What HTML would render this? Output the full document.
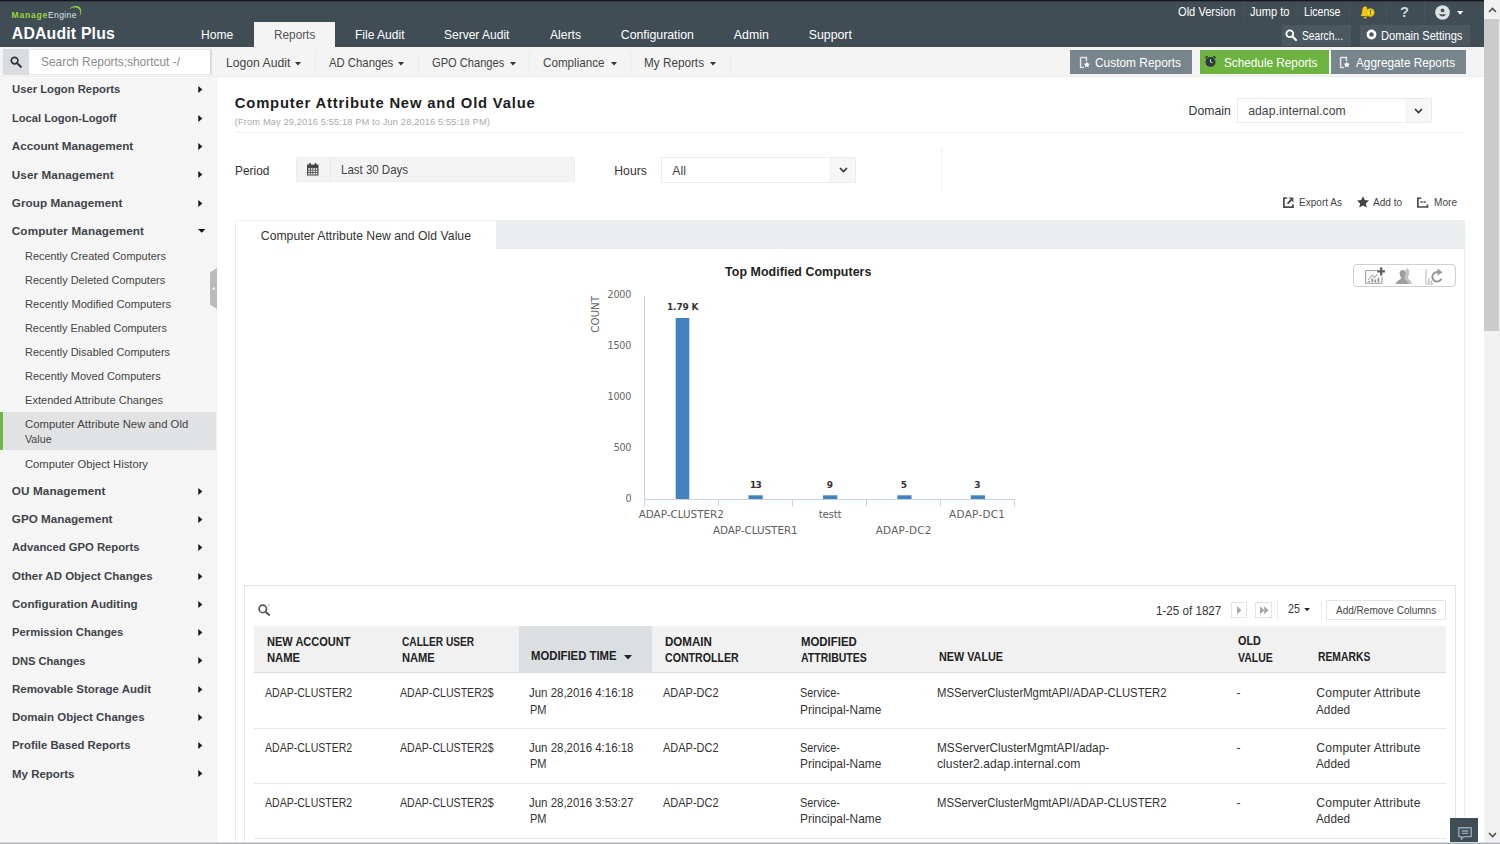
<!DOCTYPE html>
<html lang="en">
<head>
<meta charset="utf-8">
<title>ADAudit Plus - Computer Attribute New and Old Value</title>
<style>
*{box-sizing:border-box;margin:0;padding:0}
html,body{width:1500px;height:844px;overflow:hidden;background:#fff}
body{font-family:"Liberation Sans",sans-serif;color:#333;position:relative}
.t{position:absolute;white-space:pre;display:block;transform-origin:0 50%}
.abs{position:absolute}
svg{position:absolute;overflow:visible}
ul{list-style:none}
a{color:inherit;text-decoration:none}
</style>
</head>
<body>

<header class="abs" style="left:0;top:0;width:1484px;height:47px;background:#404d55">
<div style="position:absolute;left:0px;top:0px;width:1484px;height:1px;background:#14181b"></div>
<div style="position:absolute;left:0px;top:1px;width:1484px;height:1px;background:#313b41"></div>
<span class="t" style="left:11.6px;top:10px;font-size:8.6px;line-height:11px;font-weight:700;color:#9ad53a;letter-spacing:0.76px;">Manage</span>
<span class="t" style="left:48.0px;top:10px;font-size:8.6px;line-height:11px;color:#dde3e7;letter-spacing:0.35px;">Engine</span>
<svg style="left:68px;top:5px" width="14" height="13" viewBox="0 0 14 13"><path d="M1.2 4.2 C4 1 9 0 11.8 2.6 C14.2 5 13.6 9.2 11.2 12 C12.6 9 12.8 5.6 10.8 3.9 C8.4 1.9 4.4 2.4 1.2 4.2Z" fill="#8fd03a"/></svg>
<span class="t" style="left:11.8px;top:23px;font-size:15.8px;line-height:21px;font-weight:700;color:#fff;letter-spacing:0.19px;">ADAudit Plus</span>
<nav>
<div style="position:absolute;left:254px;top:22px;width:81px;height:25px;background:#f4f4f4"></div>
<a class="t" style="left:201.0px;top:27px;font-size:12.3px;line-height:16px;color:#fff;transform:scaleX(0.981);">Home</a>
<a class="t" style="left:273.8px;top:27px;font-size:12.3px;line-height:16px;color:#555;transform:scaleX(0.959);">Reports</a>
<a class="t" style="left:355.0px;top:27px;font-size:12.3px;line-height:16px;color:#fff;transform:scaleX(0.978);">File Audit</a>
<a class="t" style="left:444.1px;top:27px;font-size:12.3px;line-height:16px;color:#fff;transform:scaleX(0.976);">Server Audit</a>
<a class="t" style="left:549.8px;top:27px;font-size:12.3px;line-height:16px;color:#fff;transform:scaleX(0.986);">Alerts</a>
<a class="t" style="left:620.8px;top:27px;font-size:12.3px;line-height:16px;color:#fff;">Configuration</a>
<a class="t" style="left:733.8px;top:27px;font-size:12.3px;line-height:16px;color:#fff;letter-spacing:0.04px;">Admin</a>
<a class="t" style="left:808.8px;top:27px;font-size:12.3px;line-height:16px;color:#fff;">Support</a>
</nav>
<a class="t" style="left:1178.3px;top:4px;font-size:12.2px;line-height:16px;color:#fff;transform:scaleX(0.912);">Old Version</a>
<a class="t" style="left:1249.8px;top:4px;font-size:12.2px;line-height:16px;color:#fff;transform:scaleX(0.911);">Jump to</a>
<a class="t" style="left:1304.3px;top:4px;font-size:12.2px;line-height:16px;color:#fff;transform:scaleX(0.869);">License</a>
<div style="position:absolute;left:1243.5px;top:3px;width:1px;height:19px;background:#47545c"></div>
<div style="position:absolute;left:1296.5px;top:3px;width:1px;height:19px;background:#47545c"></div>
<div style="position:absolute;left:1348.5px;top:3px;width:1px;height:19px;background:#47545c"></div>
<div style="position:absolute;left:1385.5px;top:3px;width:1px;height:19px;background:#47545c"></div>
<div style="position:absolute;left:1424px;top:3px;width:1px;height:19px;background:#47545c"></div>
<svg style="left:1359.5px;top:5.5px" width="15" height="13" viewBox="0 0 15 13"><path d="M5 0.3 C2.6 0.8 2.4 3.6 2.1 6.4 C1.9 8 1.2 8.9 0.3 9.8 L7.5 10.4 L7 1.2Z" fill="#f3c613"/><ellipse cx="5.2" cy="11.6" rx="1.5" ry="0.9" fill="#e3b40c"/><circle cx="10.3" cy="6.6" r="4.1" fill="#f7dc1c"/><circle cx="10.3" cy="6.6" r="3.6" fill="none" stroke="#d9a90a" stroke-width="0.7"/><path d="M9.6 5.2 L10.6 4.4 V8.8" fill="none" stroke="#5a4a08" stroke-width="0.9"/></svg>
<span class="t" style="left:1400.1px;top:3px;font-size:14.6px;line-height:19px;font-weight:700;color:#d3d8db;">?</span>
<svg style="left:1435px;top:4.7px" width="15" height="15" viewBox="0 0 15 15"><circle cx="7.5" cy="7.5" r="7.3" fill="#dfe2e4"/><circle cx="7.5" cy="5.4" r="1.9" fill="#46535b"/><path d="M4 8.6 C4.6 12.6 10.4 12.6 11 8.6 C9.6 9.8 5.4 9.8 4 8.6Z" fill="#46535b"/></svg>
<svg style="left:1456.8px;top:10.6px" width="6.4" height="3.8" viewBox="0 0 8 5"><path d="M0 0 L8 0 L4 5Z" fill="#fff"/></svg>
<div style="position:absolute;left:1281.5px;top:25px;width:69.5px;height:21px;background:#4b5860"></div>
<svg style="left:1285px;top:29px" width="12" height="12" viewBox="0 0 12 12"><circle cx="4.8" cy="4.8" r="3.4" fill="none" stroke="#fff" stroke-width="1.8"/><path d="M7.4 7.4 L11 11" stroke="#fff" stroke-width="2.2" stroke-linecap="round"/></svg>
<span class="t" style="left:1301.8px;top:28px;font-size:12.2px;line-height:16px;color:#fff;transform:scaleX(0.840);">Search...</span>
<div style="position:absolute;left:1359.5px;top:25px;width:110.5px;height:21px;background:#4b5860"></div>
<svg style="left:1365.5px;top:29.4px" width="11" height="11" viewBox="0 0 11 11"><circle cx="5.5" cy="5.5" r="3.6" fill="none" stroke="#fff" stroke-width="2.6"/></svg>
<span class="t" style="left:1380.6px;top:28px;font-size:12.2px;line-height:16px;color:#fff;transform:scaleX(0.910);">Domain Settings</span>
</header>
<div class="abs" style="left:0;top:47px;width:1484px;height:30px;background:#f4f4f4;border-bottom:1px solid #ececec">
<div style="position:absolute;left:3px;top:2px;width:26px;height:26px;background:#d9dcde"></div>
<svg style="left:9.5px;top:8.5px" width="12" height="12" viewBox="0 0 12 12"><circle cx="4.6" cy="4.6" r="3.3" fill="none" stroke="#333" stroke-width="1.7"/><path d="M7.2 7.2 L10.8 10.8" stroke="#333" stroke-width="2.1" stroke-linecap="round"/></svg>
<div style="position:absolute;left:29px;top:2px;width:183px;height:26px;background:#fff;border:1px solid #e6e8e9;border-left:0;border-right:2px solid #d9dcde"></div>
<span class="t" style="left:40.8px;top:7px;font-size:12.2px;line-height:16px;color:#8a8a8a;transform:scaleX(0.977);">Search Reports;shortcut -/</span>
<a class="t" style="left:226.0px;top:8px;font-size:12.2px;line-height:16px;color:#444;">Logon Audit</a>
<svg style="left:295px;top:15px" width="6" height="4" viewBox="0 0 6 4"><path d="M0 0 L6 0 L3 3.6Z" fill="#333"/></svg>
<a class="t" style="left:328.6px;top:8px;font-size:12.2px;line-height:16px;color:#444;transform:scaleX(0.929);">AD Changes</a>
<svg style="left:398px;top:15px" width="6" height="4" viewBox="0 0 6 4"><path d="M0 0 L6 0 L3 3.6Z" fill="#333"/></svg>
<a class="t" style="left:431.8px;top:8px;font-size:12.2px;line-height:16px;color:#444;transform:scaleX(0.912);">GPO Changes</a>
<svg style="left:510px;top:15px" width="6" height="4" viewBox="0 0 6 4"><path d="M0 0 L6 0 L3 3.6Z" fill="#333"/></svg>
<a class="t" style="left:543.3px;top:8px;font-size:12.2px;line-height:16px;color:#444;transform:scaleX(0.956);">Compliance</a>
<svg style="left:610.5px;top:15px" width="6" height="4" viewBox="0 0 6 4"><path d="M0 0 L6 0 L3 3.6Z" fill="#333"/></svg>
<a class="t" style="left:644.3px;top:8px;font-size:12.2px;line-height:16px;color:#444;transform:scaleX(0.963);">My Reports</a>
<svg style="left:710px;top:15px" width="6" height="4" viewBox="0 0 6 4"><path d="M0 0 L6 0 L3 3.6Z" fill="#333"/></svg>
<div style="position:absolute;left:314.5px;top:5px;width:1px;height:22px;background:#eaeaea"></div>
<div style="position:absolute;left:417.5px;top:5px;width:1px;height:22px;background:#eaeaea"></div>
<div style="position:absolute;left:529px;top:5px;width:1px;height:22px;background:#eaeaea"></div>
<div style="position:absolute;left:630px;top:5px;width:1px;height:22px;background:#eaeaea"></div>
<div style="position:absolute;left:730px;top:5px;width:1px;height:22px;background:#eaeaea"></div>
<div style="position:absolute;left:1070px;top:3px;width:122px;height:24px;background:#79858c"></div>
<div style="position:absolute;left:1200px;top:3px;width:129px;height:24px;background:#6cb33f"></div>
<div style="position:absolute;left:1331px;top:3px;width:134.5px;height:24px;background:#79858c"></div>
<svg style="left:1080px;top:10px" width="10" height="11" viewBox="0 0 10 11"><path d="M0.6 0.6 H6.4 V4 M0.6 0.6 V10.4 H4" fill="none" stroke="#e4e8ea" stroke-width="1.5"/><path d="M6.8 4.3 L7.7 6.5 L10 6.7 L8.3 8.2 L8.8 10.5 L6.8 9.3 L4.8 10.5 L5.3 8.2 L3.6 6.7 L5.9 6.5Z" fill="#fff"/></svg>
<span class="t" style="left:1094.8px;top:8px;font-size:12.2px;line-height:16px;color:#fff;transform:scaleX(0.977);">Custom Reports</span>
<svg style="left:1204px;top:8px" width="13" height="13" viewBox="0 0 13 13"><circle cx="6.5" cy="7" r="5" fill="#2f3a40"/><path d="M6.5 4.2 V7 L8.6 7.8" stroke="#cfe6b8" stroke-width="1" fill="none"/><path d="M1.5 3.2 L3.6 1.2 M11.5 3.2 L9.4 1.2" stroke="#2f3a40" stroke-width="1.6"/></svg>
<span class="t" style="left:1223.8px;top:8px;font-size:12.2px;line-height:16px;color:#fff;transform:scaleX(0.965);">Schedule Reports</span>
<svg style="left:1340px;top:10px" width="10" height="11" viewBox="0 0 10 11"><path d="M0.6 0.6 H6.4 V4 M0.6 0.6 V10.4 H4" fill="none" stroke="#e4e8ea" stroke-width="1.5"/><path d="M6.8 4.3 L7.7 6.5 L10 6.7 L8.3 8.2 L8.8 10.5 L6.8 9.3 L4.8 10.5 L5.3 8.2 L3.6 6.7 L5.9 6.5Z" fill="#fff"/></svg>
<span class="t" style="left:1355.8px;top:8px;font-size:12.2px;line-height:16px;color:#fff;transform:scaleX(0.968);">Aggregate Reports</span>
</div>
<aside class="abs" style="left:0;top:77px;width:217px;height:767px;background:#f5f5f5;border-right:1px solid #f0f0f0"><ul>
<li><a class="t" style="left:11.8px;top:4px;font-size:11.7px;line-height:15px;font-weight:700;color:#40444a;transform:scaleX(0.964);">User Logon Reports</a>
<svg style="left:197.5px;top:9.2px" width="5" height="7" viewBox="0 0 5 7"><path d="M0.3 0 L4.3 3.5 L0.3 7Z" fill="#111"/></svg></li>
<li><a class="t" style="left:11.8px;top:33px;font-size:11.7px;line-height:15px;font-weight:700;color:#40444a;transform:scaleX(0.953);">Local Logon-Logoff</a>
<svg style="left:197.5px;top:37.6px" width="5" height="7" viewBox="0 0 5 7"><path d="M0.3 0 L4.3 3.5 L0.3 7Z" fill="#111"/></svg></li>
<li><a class="t" style="left:11.8px;top:61px;font-size:11.7px;line-height:15px;font-weight:700;color:#40444a;">Account Management</a>
<svg style="left:197.5px;top:65.9px" width="5" height="7" viewBox="0 0 5 7"><path d="M0.3 0 L4.3 3.5 L0.3 7Z" fill="#111"/></svg></li>
<li><a class="t" style="left:11.8px;top:90px;font-size:11.7px;line-height:15px;font-weight:700;color:#40444a;letter-spacing:0.09px;">User Management</a>
<svg style="left:197.5px;top:94.3px" width="5" height="7" viewBox="0 0 5 7"><path d="M0.3 0 L4.3 3.5 L0.3 7Z" fill="#111"/></svg></li>
<li><a class="t" style="left:11.8px;top:118px;font-size:11.7px;line-height:15px;font-weight:700;color:#40444a;letter-spacing:0.05px;">Group Management</a>
<svg style="left:197.5px;top:122.7px" width="5" height="7" viewBox="0 0 5 7"><path d="M0.3 0 L4.3 3.5 L0.3 7Z" fill="#111"/></svg></li>
<li><a class="t" style="left:11.8px;top:146px;font-size:11.7px;line-height:15px;font-weight:700;color:#40444a;letter-spacing:0.13px;">Computer Management</a>
<svg style="left:198.3px;top:152.4px" width="7.4" height="3.8" viewBox="0 0 8 4"><path d="M0 0 L8 0 L4 4Z" fill="#111"/></svg></li>
<li><a class="t" style="left:25.1px;top:171px;font-size:11.7px;line-height:15px;color:#444;transform:scaleX(0.935);">Recently Created Computers</a></li>
<li><a class="t" style="left:25.1px;top:195px;font-size:11.7px;line-height:15px;color:#444;transform:scaleX(0.938);">Recently Deleted Computers</a></li>
<li><a class="t" style="left:25.1px;top:219px;font-size:11.7px;line-height:15px;color:#444;transform:scaleX(0.952);">Recently Modified Computers</a></li>
<li><a class="t" style="left:25.1px;top:243px;font-size:11.7px;line-height:15px;color:#444;transform:scaleX(0.933);">Recently Enabled Computers</a></li>
<li><a class="t" style="left:25.1px;top:267px;font-size:11.7px;line-height:15px;color:#444;transform:scaleX(0.938);">Recently Disabled Computers</a></li>
<li><a class="t" style="left:25.1px;top:291px;font-size:11.7px;line-height:15px;color:#444;transform:scaleX(0.941);">Recently Moved Computers</a></li>
<li><a class="t" style="left:25.1px;top:315px;font-size:11.7px;line-height:15px;color:#444;transform:scaleX(0.948);">Extended Attribute Changes</a></li>
<li><div style="position:absolute;left:0px;top:335px;width:216px;height:38px;background:#e1e2e3;border-left:3px solid #70b644"></div>
<a class="t" style="left:25.1px;top:339px;font-size:11.6px;line-height:15px;color:#444;transform:scaleX(0.978);">Computer Attribute New and Old</a>
<a class="t" style="left:25.1px;top:354px;font-size:11.6px;line-height:15px;color:#444;transform:scaleX(0.927);">Value</a></li>
<li><a class="t" style="left:25.1px;top:379px;font-size:11.6px;line-height:15px;color:#444;transform:scaleX(0.969);">Computer Object History</a></li>
<li><a class="t" style="left:11.8px;top:406px;font-size:11.7px;line-height:15px;font-weight:700;color:#40444a;letter-spacing:0.12px;">OU Management</a>
<svg style="left:197.5px;top:410.7px" width="5" height="7" viewBox="0 0 5 7"><path d="M0.3 0 L4.3 3.5 L0.3 7Z" fill="#111"/></svg></li>
<li><a class="t" style="left:11.8px;top:434px;font-size:11.7px;line-height:15px;font-weight:700;color:#40444a;">GPO Management</a>
<svg style="left:197.5px;top:439px" width="5" height="7" viewBox="0 0 5 7"><path d="M0.3 0 L4.3 3.5 L0.3 7Z" fill="#111"/></svg></li>
<li><a class="t" style="left:11.8px;top:462px;font-size:11.7px;line-height:15px;font-weight:700;color:#40444a;transform:scaleX(0.962);">Advanced GPO Reports</a>
<svg style="left:197.5px;top:467.2px" width="5" height="7" viewBox="0 0 5 7"><path d="M0.3 0 L4.3 3.5 L0.3 7Z" fill="#111"/></svg></li>
<li><a class="t" style="left:11.8px;top:491px;font-size:11.7px;line-height:15px;font-weight:700;color:#40444a;transform:scaleX(0.982);">Other AD Object Changes</a>
<svg style="left:197.5px;top:495.5px" width="5" height="7" viewBox="0 0 5 7"><path d="M0.3 0 L4.3 3.5 L0.3 7Z" fill="#111"/></svg></li>
<li><a class="t" style="left:11.8px;top:519px;font-size:11.7px;line-height:15px;font-weight:700;color:#40444a;transform:scaleX(0.990);">Configuration Auditing</a>
<svg style="left:197.5px;top:523.8px" width="5" height="7" viewBox="0 0 5 7"><path d="M0.3 0 L4.3 3.5 L0.3 7Z" fill="#111"/></svg></li>
<li><a class="t" style="left:11.8px;top:547px;font-size:11.7px;line-height:15px;font-weight:700;color:#40444a;transform:scaleX(0.963);">Permission Changes</a>
<svg style="left:197.5px;top:552px" width="5" height="7" viewBox="0 0 5 7"><path d="M0.3 0 L4.3 3.5 L0.3 7Z" fill="#111"/></svg></li>
<li><a class="t" style="left:11.8px;top:576px;font-size:11.7px;line-height:15px;font-weight:700;color:#40444a;transform:scaleX(0.951);">DNS Changes</a>
<svg style="left:197.5px;top:580.3px" width="5" height="7" viewBox="0 0 5 7"><path d="M0.3 0 L4.3 3.5 L0.3 7Z" fill="#111"/></svg></li>
<li><a class="t" style="left:11.8px;top:604px;font-size:11.7px;line-height:15px;font-weight:700;color:#40444a;transform:scaleX(0.980);">Removable Storage Audit</a>
<svg style="left:197.5px;top:608.6px" width="5" height="7" viewBox="0 0 5 7"><path d="M0.3 0 L4.3 3.5 L0.3 7Z" fill="#111"/></svg></li>
<li><a class="t" style="left:11.8px;top:632px;font-size:11.7px;line-height:15px;font-weight:700;color:#40444a;transform:scaleX(0.981);">Domain Object Changes</a>
<svg style="left:197.5px;top:636.9px" width="5" height="7" viewBox="0 0 5 7"><path d="M0.3 0 L4.3 3.5 L0.3 7Z" fill="#111"/></svg></li>
<li><a class="t" style="left:11.8px;top:660px;font-size:11.7px;line-height:15px;font-weight:700;color:#40444a;transform:scaleX(0.970);">Profile Based Reports</a>
<svg style="left:197.5px;top:665.1px" width="5" height="7" viewBox="0 0 5 7"><path d="M0.3 0 L4.3 3.5 L0.3 7Z" fill="#111"/></svg></li>
<li><a class="t" style="left:11.8px;top:689px;font-size:11.7px;line-height:15px;font-weight:700;color:#40444a;transform:scaleX(0.982);">My Reports</a>
<svg style="left:197.5px;top:693.4px" width="5" height="7" viewBox="0 0 5 7"><path d="M0.3 0 L4.3 3.5 L0.3 7Z" fill="#111"/></svg></li>
</ul>
<svg style="left:209.5px;top:190.5px" width="7" height="41" viewBox="0 0 7 41"><path d="M7 0 L0 4.5 V36.5 L7 41Z" fill="#b7bbbd"/><path d="M4.6 18.5 L2.4 20.5 L4.6 22.5Z" fill="#fff"/></svg>
</aside>
<main class="abs" style="left:217px;top:77px;width:1267px;height:767px;background:#fff">
<div style="position:absolute;left:18px;top:143px;width:1230px;height:624px;border-left:1px solid #e9e9e9;border-right:1px solid #ededed"></div>
<h1 class="t" style="left:17.8px;top:17px;font-size:14.8px;line-height:19px;font-weight:700;color:#1d1d1d;letter-spacing:0.81px;">Computer Attribute New and Old Value</h1>
<span class="t" style="left:17.8px;top:39px;font-size:9.3px;line-height:12px;color:#aaa;letter-spacing:0.12px;">(From May 29,2016 5:55:18 PM to Jun 28,2016 5:55:18 PM)</span>
<label class="t" style="left:971.6px;top:26px;font-size:12.2px;line-height:16px;color:#333;letter-spacing:0.04px;">Domain</label>
<div style="position:absolute;left:1020px;top:21px;width:195px;height:24.5px;background:#fff;border:1px solid #ebebeb"></div>
<div style="position:absolute;left:1189px;top:22px;width:25px;height:22.5px;background:#f6f6f6;border-left:1px solid #efefef"></div>
<span class="t" style="left:1031.2px;top:26px;font-size:12.2px;line-height:16px;color:#444;letter-spacing:0.04px;">adap.internal.com</span>
<svg style="left:1197px;top:30.5px" width="9" height="6" viewBox="0 0 9 6"><path d="M1 1 L4.5 4.5 L8 1" fill="none" stroke="#333" stroke-width="1.7"/></svg>
<div style="position:absolute;left:18px;top:54.5px;width:1230px;height:1px;background:#f3f3f3"></div>
<label class="t" style="left:17.8px;top:86px;font-size:12.2px;line-height:16px;color:#333;transform:scaleX(0.979);">Period</label>
<div style="position:absolute;left:79px;top:80px;width:279px;height:25px;background:#f3f3f3;border:1px solid #ededed"></div>
<div style="position:absolute;left:113px;top:81px;width:1px;height:23px;background:#e8e8e8"></div>
<svg style="left:89.8px;top:86.3px" width="11.5" height="12.5" viewBox="0 0 11 12"><rect x="0" y="1.5" width="11" height="10.5" fill="#444"/><rect x="2" y="0" width="1.6" height="3" fill="#444"/><rect x="7.4" y="0" width="1.6" height="3" fill="#444"/><g fill="#f3f3f3"><rect x="1.2" y="5" width="1.7" height="1.5"/><rect x="3.6" y="5" width="1.7" height="1.5"/><rect x="6" y="5" width="1.7" height="1.5"/><rect x="8.3" y="5" width="1.6" height="1.5"/><rect x="1.2" y="7.3" width="1.7" height="1.5"/><rect x="3.6" y="7.3" width="1.7" height="1.5"/><rect x="6" y="7.3" width="1.7" height="1.5"/><rect x="8.3" y="7.3" width="1.6" height="1.5"/><rect x="1.2" y="9.6" width="1.7" height="1.5"/><rect x="3.6" y="9.6" width="1.7" height="1.5"/><rect x="6" y="9.6" width="1.7" height="1.5"/><rect x="8.3" y="9.6" width="1.6" height="1.5"/></g></svg>
<span class="t" style="left:123.8px;top:85px;font-size:12.2px;line-height:16px;color:#444;transform:scaleX(0.942);">Last 30 Days</span>
<label class="t" style="left:397.3px;top:86px;font-size:12.2px;line-height:16px;color:#333;">Hours</label>
<div style="position:absolute;left:444px;top:80px;width:195px;height:26px;background:#fff;border:1px solid #ebebeb"></div>
<div style="position:absolute;left:613px;top:81px;width:25px;height:24px;background:#f6f6f6;border-left:1px solid #efefef"></div>
<span class="t" style="left:455.3px;top:86px;font-size:12.2px;line-height:16px;color:#444;">All</span>
<svg style="left:621.5px;top:90px" width="9" height="6" viewBox="0 0 9 6"><path d="M1 1 L4.5 4.5 L8 1" fill="none" stroke="#333" stroke-width="1.7"/></svg>
<div style="position:absolute;left:724px;top:70.5px;width:1px;height:44px;background:#f0f0f0"></div>
<svg style="left:1066px;top:120px" width="11" height="11" viewBox="0 0 11 11"><path d="M4.2 1 H0.9 V10.1 H10 V7.2" fill="none" stroke="#4a4a4a" stroke-width="1.7"/><path d="M4.6 6.6 L8.2 3" fill="none" stroke="#4a4a4a" stroke-width="2"/><path d="M5.6 0.6 H10.4 V5.4Z" fill="#4a4a4a"/></svg>
<a class="t" style="left:1081.8px;top:119px;font-size:10.3px;line-height:13px;color:#444;transform:scaleX(0.976);">Export As</a>
<svg style="left:1140px;top:119px" width="12" height="12" viewBox="0 0 12 12"><path d="M6 0.3 L7.8 4.1 L12 4.6 L8.9 7.4 L9.7 11.6 L6 9.5 L2.3 11.6 L3.1 7.4 L0 4.6 L4.2 4.1Z" fill="#444"/></svg>
<a class="t" style="left:1155.6px;top:119px;font-size:10.3px;line-height:13px;color:#444;transform:scaleX(0.980);">Add to</a>
<svg style="left:1200px;top:120px" width="11" height="11" viewBox="0 0 11 11"><path d="M0.9 0.5 V10 H10.5 V7.6" fill="none" stroke="#4a4a4a" stroke-width="1.7"/><path d="M0.9 1.2 H4.2" stroke="#4a4a4a" stroke-width="1.5"/><path d="M3.4 5 H9.6" stroke="#4a4a4a" stroke-width="1.3" stroke-dasharray="2.2 0.9"/></svg>
<a class="t" style="left:1216.8px;top:119px;font-size:10.3px;line-height:13px;color:#444;transform:scaleX(0.980);">More</a>
<div style="position:absolute;left:18px;top:143px;width:1230px;height:29px;background:#ebeeee"></div>
<div style="position:absolute;left:18px;top:143px;width:261px;height:29px;background:#fff;border-left:1px solid #ececec;border-top:1px solid #f1f1f1"></div>
<a class="t" style="left:43.8px;top:151px;font-size:12.2px;line-height:16px;color:#333;letter-spacing:0.03px;">Computer Attribute New and Old Value</a>
<section>
<h2 class="t" style="left:508.1px;top:187px;font-size:12.4px;line-height:16px;font-weight:700;color:#222;letter-spacing:0.06px;">Top Modified Computers</h2>
<div style="position:absolute;left:1136px;top:187px;width:103px;height:23px;border:1px solid #cfcfcf;border-radius:4px;background:#fff"></div>
<svg style="left:1147.8px;top:190px" width="20" height="17" viewBox="0 0 20 17"><path d="M12 3.6 H0.7 V16.3 H17 V9.5" fill="none" stroke="#9a9a9a" stroke-width="1"/><path d="M3.2 13 L7.2 8.2 L9.6 10.4 L12.6 7" fill="none" stroke="#a5a5a5" stroke-width="1.1"/><path d="M4 15.2 V14 M7.3 15.2 V11.6 M10.3 15.2 V12.6 M13.4 15.2 V10.8" stroke="#8e8e8e" stroke-width="1.7"/><path d="M16.2 0.4 V8.4 M12.2 4.4 H20" stroke="#5c5c5c" stroke-width="2.3"/></svg>
<svg style="left:1177.5px;top:190.5px" width="18" height="17" viewBox="0 0 18 17"><path d="M11.2 0.6 C13.6 0.6 14.6 2.6 14.2 5.2 C13.9 7.4 13 8.2 13 9.4 C13 11.4 16.4 11.8 17 16 H6 Z" fill="#c4c4c4"/><path d="M7.6 2 C5.4 2 4.4 3.8 4.7 6 C5 8.2 6 9 6 10 C6 12 1.4 12.2 0.6 16 H13.6 C13.2 12.6 9.4 12 9.4 10 C9.4 9 10.3 8.2 10.6 6 C10.9 3.8 9.8 2 7.6 2Z" fill="#9f9f9f"/></svg>
<svg style="left:1207.5px;top:190.5px" width="19" height="17" viewBox="0 0 19 17"><path d="M1 1.2 V16 H8" fill="none" stroke="#b5b5b5" stroke-width="1"/><path d="M3.8 15 V10.6 M6.4 15 V12.4" stroke="#b9b9b9" stroke-width="1.3"/><path d="M14.6 4.9 A4.7 4.7 0 1 0 16.4 10.6" fill="none" stroke="#999" stroke-width="2.1"/><path d="M12.4 0.6 L17.6 4.2 L12.6 7.4Z" fill="#999"/></svg>
<svg style="left:363px;top:208px;font-family:'DejaVu Sans', 'Liberation Sans', sans-serif" width="480" height="260" viewBox="0 0 480 260"><path d="M64.5 11 V214.5" stroke="#c6d4e3" stroke-width="1" fill="none"/><path d="M64 214.5 H435" stroke="#c6d4e3" stroke-width="1" fill="none"/><path d="M64.5 214.5 V221.5" stroke="#c6d4e3" stroke-width="1" fill="none"/><path d="M138.5 214.5 V221.5" stroke="#c6d4e3" stroke-width="1" fill="none"/><path d="M212.5 214.5 V221.5" stroke="#c6d4e3" stroke-width="1" fill="none"/><path d="M286.5 214.5 V221.5" stroke="#c6d4e3" stroke-width="1" fill="none"/><path d="M360.5 214.5 V221.5" stroke="#c6d4e3" stroke-width="1" fill="none"/><path d="M434.5 214.5 V221.5" stroke="#c6d4e3" stroke-width="1" fill="none"/><rect x="95.7" y="33.0" width="13.6" height="181.0" fill="#4280bf"/><rect x="168.5" y="210.3" width="14.2" height="3.7" fill="#4280bf"/><rect x="243.0" y="210.3" width="14.3" height="3.7" fill="#4280bf"/><rect x="317.3" y="210.3" width="14.2" height="3.7" fill="#4280bf"/><rect x="390.8" y="210.3" width="14.2" height="3.7" fill="#4280bf"/><text x="27.5" y="12.8" font-size="9.6" fill="#666" letter-spacing="-0.21">2000</text><text x="27.5" y="64.2" font-size="9.6" fill="#666" letter-spacing="-0.21">1500</text><text x="27.5" y="115.2" font-size="9.6" fill="#666" letter-spacing="-0.21">1000</text><text x="33.7" y="166.3" font-size="9.6" fill="#666" letter-spacing="-0.36">500</text><text x="45.4" y="217.0" font-size="9.6" fill="#666">0</text><text x="87.0" y="24.5" font-size="9" fill="#333" font-weight="700" letter-spacing="-0.15">1.79 K</text><text x="170.0" y="203.0" font-size="9" fill="#333" font-weight="700" letter-spacing="-0.83">13</text><text x="246.8" y="203.0" font-size="9" fill="#333" font-weight="700">9</text><text x="320.8" y="203.0" font-size="9" fill="#333" font-weight="700">5</text><text x="394.3" y="203.0" font-size="9" fill="#333" font-weight="700">3</text><text x="58.7" y="232.5" font-size="10.4" fill="#606060" letter-spacing="-0.01">ADAP-CLUSTER2</text><text x="132.9" y="249.0" font-size="10.4" fill="#606060" letter-spacing="-0.04">ADAP-CLUSTER1</text><text x="238.7" y="232.5" font-size="10.4" fill="#606060" letter-spacing="-0.31">testt</text><text x="295.7" y="249.0" font-size="10.4" fill="#606060" letter-spacing="0.30">ADAP-DC2</text><text x="369.1" y="232.5" font-size="10.4" fill="#606060" letter-spacing="0.31">ADAP-DC1</text><text x="0" y="0" font-size="10.4" fill="#666" letter-spacing="-0.12" transform="translate(19.3 47.7) rotate(-90)">COUNT</text></svg>
</section>
<section>
<div style="position:absolute;left:27px;top:508px;width:1212px;height:265px;border:1px solid #e6e6e6;background:#fff"></div>
<svg style="left:41px;top:527px" width="13" height="12" viewBox="0 0 13 12"><circle cx="4.8" cy="4.9" r="3.7" fill="none" stroke="#555" stroke-width="1.7"/><path d="M7.6 7.7 L11.2 10.9" stroke="#555" stroke-width="2" stroke-linecap="round"/><path d="M10 0.7 C11 0.5 11.2 1.6 10.4 2.2" fill="none" stroke="#888" stroke-width="0.8"/></svg>
<span class="t" style="left:938.8px;top:526px;font-size:12.2px;line-height:16px;color:#333;transform:scaleX(0.954);">1-25 of 1827</span>
<div style="position:absolute;left:1014px;top:525px;width:16px;height:16px;border:1px solid #e3e3e3;background:#fff"></div>
<svg style="left:1020.3px;top:528.8px" width="4.4" height="8.4" viewBox="0 0 4 8"><path d="M0 0 L4 4 L0 8Z" fill="#a4a6aa"/></svg>
<div style="position:absolute;left:1038px;top:525px;width:17px;height:16px;border:1px solid #e3e3e3;background:#fff"></div>
<svg style="left:1042.6px;top:528.8px" width="8.6" height="8.4" viewBox="0 0 8.6 8"><path d="M0 0 L4.4 4 L0 8Z M4.2 0 L8.6 4 L4.2 8Z" fill="#a4a6aa"/></svg>
<div style="position:absolute;left:1059.5px;top:523px;width:1px;height:19px;background:#eeeeee"></div>
<span class="t" style="left:1070.8px;top:524px;font-size:12.2px;line-height:16px;color:#333;transform:scaleX(0.870);">25</span>
<svg style="left:1086.6px;top:531.2px" width="6.2" height="3.8" viewBox="0 0 6 4"><path d="M0 0 L6 0 L3 3.5Z" fill="#222"/></svg>
<div style="position:absolute;left:1103.5px;top:523px;width:1px;height:19px;background:#eeeeee"></div>
<div style="position:absolute;left:1109px;top:523px;width:120px;height:20px;border:1px solid #e5e5e5;background:#fff"></div>
<a class="t" style="left:1119.0px;top:527px;font-size:10.2px;line-height:13px;color:#444;transform:scaleX(0.983);">Add/Remove Columns</a>
<div style="position:absolute;left:37px;top:548.5px;width:1192px;height:47.5px;background:#f1f1f1;border-bottom:1px solid #dcdcdc"></div>
<div style="position:absolute;left:302px;top:548.5px;width:133px;height:46.5px;background:#dcdfe1"></div>
<span class="t" style="left:49.8px;top:557px;font-size:12.2px;line-height:16px;font-weight:700;color:#222;transform:scaleX(0.905);">NEW ACCOUNT</span>
<span class="t" style="left:49.6px;top:573px;font-size:12.2px;line-height:16px;font-weight:700;color:#222;transform:scaleX(0.922);">NAME</span>
<span class="t" style="left:185.0px;top:557px;font-size:12.2px;line-height:16px;font-weight:700;color:#222;transform:scaleX(0.833);">CALLER USER</span>
<span class="t" style="left:185.3px;top:573px;font-size:12.2px;line-height:16px;font-weight:700;color:#222;transform:scaleX(0.914);">NAME</span>
<span class="t" style="left:314.4px;top:571px;font-size:12.2px;line-height:16px;font-weight:700;color:#222;transform:scaleX(0.929);">MODIFIED TIME</span>
<span class="t" style="left:448.0px;top:557px;font-size:12.2px;line-height:16px;font-weight:700;color:#222;transform:scaleX(0.949);">DOMAIN</span>
<span class="t" style="left:448.0px;top:573px;font-size:12.2px;line-height:16px;font-weight:700;color:#222;transform:scaleX(0.870);">CONTROLLER</span>
<span class="t" style="left:584.3px;top:557px;font-size:12.2px;line-height:16px;font-weight:700;color:#222;transform:scaleX(0.935);">MODIFIED</span>
<span class="t" style="left:584.3px;top:573px;font-size:12.2px;line-height:16px;font-weight:700;color:#222;transform:scaleX(0.863);">ATTRIBUTES</span>
<span class="t" style="left:722.1px;top:572px;font-size:12.2px;line-height:16px;font-weight:700;color:#222;transform:scaleX(0.886);">NEW VALUE</span>
<span class="t" style="left:1021.3px;top:556px;font-size:12.2px;line-height:16px;font-weight:700;color:#222;transform:scaleX(0.890);">OLD</span>
<span class="t" style="left:1021.3px;top:573px;font-size:12.2px;line-height:16px;font-weight:700;color:#222;transform:scaleX(0.859);">VALUE</span>
<span class="t" style="left:1101.1px;top:572px;font-size:12.2px;line-height:16px;font-weight:700;color:#222;transform:scaleX(0.849);">REMARKS</span>
<svg style="left:407px;top:577.5px" width="8" height="5" viewBox="0 0 8 5"><path d="M0 0 L8 0 L4 4.4Z" fill="#222"/></svg>
<span class="t" style="left:47.8px;top:608px;font-size:12.1px;line-height:16px;color:#333;transform:scaleX(0.871);">ADAP-CLUSTER2</span>
<span class="t" style="left:183.4px;top:608px;font-size:12.1px;line-height:16px;color:#333;transform:scaleX(0.876);">ADAP-CLUSTER2$</span>
<span class="t" style="left:312.3px;top:608px;font-size:12.1px;line-height:16px;color:#333;transform:scaleX(0.947);">Jun 28,2016 4:16:18</span>
<span class="t" style="left:312.8px;top:625px;font-size:12.1px;line-height:16px;color:#333;transform:scaleX(0.910);">PM</span>
<span class="t" style="left:445.8px;top:608px;font-size:12.1px;line-height:16px;color:#333;transform:scaleX(0.908);">ADAP-DC2</span>
<span class="t" style="left:582.7px;top:608px;font-size:12.1px;line-height:16px;color:#333;transform:scaleX(0.902);">Service-</span>
<span class="t" style="left:582.7px;top:625px;font-size:12.1px;line-height:16px;color:#333;transform:scaleX(0.983);">Principal-Name</span>
<span class="t" style="left:720.0px;top:608px;font-size:12.1px;line-height:16px;color:#333;transform:scaleX(0.936);">MSServerClusterMgmtAPI/ADAP-CLUSTER2</span>
<span class="t" style="left:1019.5px;top:608px;font-size:12.1px;line-height:16px;color:#333;">-</span>
<span class="t" style="left:1099.3px;top:608px;font-size:12.1px;line-height:16px;color:#333;letter-spacing:0.19px;">Computer Attribute</span>
<span class="t" style="left:1099.3px;top:625px;font-size:12.1px;line-height:16px;color:#333;transform:scaleX(0.972);">Added</span>
<div style="position:absolute;left:37px;top:651.1px;width:1192px;height:1px;background:#e6e6e6"></div>
<span class="t" style="left:47.8px;top:663px;font-size:12.1px;line-height:16px;color:#333;transform:scaleX(0.871);">ADAP-CLUSTER2</span>
<span class="t" style="left:183.4px;top:663px;font-size:12.1px;line-height:16px;color:#333;transform:scaleX(0.876);">ADAP-CLUSTER2$</span>
<span class="t" style="left:312.3px;top:663px;font-size:12.1px;line-height:16px;color:#333;transform:scaleX(0.947);">Jun 28,2016 4:16:18</span>
<span class="t" style="left:312.8px;top:679px;font-size:12.1px;line-height:16px;color:#333;transform:scaleX(0.910);">PM</span>
<span class="t" style="left:445.8px;top:663px;font-size:12.1px;line-height:16px;color:#333;transform:scaleX(0.908);">ADAP-DC2</span>
<span class="t" style="left:582.7px;top:663px;font-size:12.1px;line-height:16px;color:#333;transform:scaleX(0.902);">Service-</span>
<span class="t" style="left:582.7px;top:679px;font-size:12.1px;line-height:16px;color:#333;transform:scaleX(0.983);">Principal-Name</span>
<span class="t" style="left:720.0px;top:663px;font-size:12.1px;line-height:16px;color:#333;transform:scaleX(0.978);">MSServerClusterMgmtAPI/adap-</span>
<span class="t" style="left:720.0px;top:679px;font-size:12.1px;line-height:16px;color:#333;letter-spacing:0.06px;">cluster2.adap.internal.com</span>
<span class="t" style="left:1019.5px;top:663px;font-size:12.1px;line-height:16px;color:#333;">-</span>
<span class="t" style="left:1099.3px;top:663px;font-size:12.1px;line-height:16px;color:#333;letter-spacing:0.19px;">Computer Attribute</span>
<span class="t" style="left:1099.3px;top:679px;font-size:12.1px;line-height:16px;color:#333;transform:scaleX(0.972);">Added</span>
<div style="position:absolute;left:37px;top:706.1px;width:1192px;height:1px;background:#e6e6e6"></div>
<span class="t" style="left:47.8px;top:718px;font-size:12.1px;line-height:16px;color:#333;transform:scaleX(0.871);">ADAP-CLUSTER2</span>
<span class="t" style="left:183.4px;top:718px;font-size:12.1px;line-height:16px;color:#333;transform:scaleX(0.876);">ADAP-CLUSTER2$</span>
<span class="t" style="left:312.3px;top:718px;font-size:12.1px;line-height:16px;color:#333;transform:scaleX(0.947);">Jun 28,2016 3:53:27</span>
<span class="t" style="left:312.8px;top:734px;font-size:12.1px;line-height:16px;color:#333;transform:scaleX(0.910);">PM</span>
<span class="t" style="left:445.8px;top:718px;font-size:12.1px;line-height:16px;color:#333;transform:scaleX(0.908);">ADAP-DC2</span>
<span class="t" style="left:582.7px;top:718px;font-size:12.1px;line-height:16px;color:#333;transform:scaleX(0.902);">Service-</span>
<span class="t" style="left:582.7px;top:734px;font-size:12.1px;line-height:16px;color:#333;transform:scaleX(0.983);">Principal-Name</span>
<span class="t" style="left:720.0px;top:718px;font-size:12.1px;line-height:16px;color:#333;transform:scaleX(0.936);">MSServerClusterMgmtAPI/ADAP-CLUSTER2</span>
<span class="t" style="left:1019.5px;top:718px;font-size:12.1px;line-height:16px;color:#333;">-</span>
<span class="t" style="left:1099.3px;top:718px;font-size:12.1px;line-height:16px;color:#333;letter-spacing:0.19px;">Computer Attribute</span>
<span class="t" style="left:1099.3px;top:734px;font-size:12.1px;line-height:16px;color:#333;transform:scaleX(0.972);">Added</span>
<div style="position:absolute;left:37px;top:760.7px;width:1192px;height:1px;background:#e6e6e6"></div>
</section>
</main>
<div style="position:absolute;left:1484px;top:0px;width:16px;height:844px;background:#f1f1f1"></div>
<div style="position:absolute;left:1484px;top:19px;width:15px;height:312px;background:#cbcbcb"></div>
<svg style="left:1487.5px;top:7px" width="9" height="6" viewBox="0 0 9 6"><path d="M1 5 L4.5 1.5 L8 5" fill="none" stroke="#505050" stroke-width="1.6"/></svg>
<svg style="left:1487.5px;top:832px" width="9" height="6" viewBox="0 0 9 6"><path d="M1 1 L4.5 4.5 L8 1" fill="none" stroke="#505050" stroke-width="1.6"/></svg>
<div style="position:absolute;left:1450px;top:818px;width:28px;height:26px;background:#3f4d56"></div>
<svg style="left:1458px;top:826.8px" width="14" height="13" viewBox="0 0 14 13"><path d="M0.8 0.8 H13.2 V9.6 H5.6 L3.4 12.2 V9.6 H0.8Z" fill="none" stroke="#9aa6ae" stroke-width="1.4" stroke-linejoin="round"/><path d="M3.8 4 H10.2 M3.8 6.4 H10.2" stroke="#9aa6ae" stroke-width="1.3"/></svg>
<div style="position:absolute;left:0px;top:842px;width:1500px;height:1px;background:#d9dce0"></div>
<div style="position:absolute;left:0px;top:843px;width:1500px;height:1px;background:#a9afb8"></div>
</body>
</html>
